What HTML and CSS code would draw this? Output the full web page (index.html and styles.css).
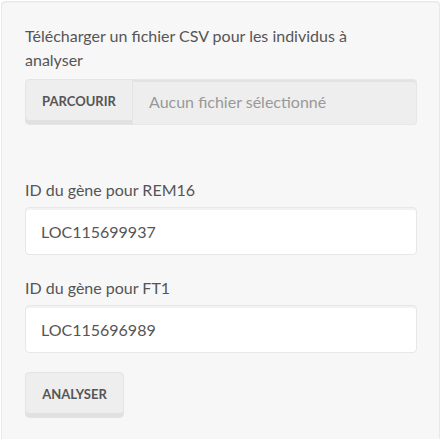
FILE: index.html
```html
<!DOCTYPE html>
<html lang="fr">
<head>
<meta charset="utf-8">
<link rel="stylesheet" href="styles.css">
</head>
<body>
<div class="well">
  <div class="field">
    <label class="lbl lbl-file">Télécharger un fichier CSV pour les individus à<br>analyser</label>
    <div class="input-group">
      <span class="btn btn-browse">Parcourir</span>
      <span class="file-name">Aucun fichier sélectionné</span>
    </div>
  </div>
  <div class="field field-gap">
    <label class="lbl" for="rem16">ID du gène pour REM16</label>
    <input class="text-input" id="rem16" type="text" value="LOC115699937">
  </div>
  <div class="field">
    <label class="lbl" for="ft1">ID du gène pour FT1</label>
    <input class="text-input" id="ft1" type="text" value="LOC115696989">
  </div>
  <div class="actions">
    <button class="btn btn-action" type="button">Analyser</button>
  </div>
</div>
</body>
</html>
```

FILE: styles.css
```css
html, body {
  margin: 0;
  padding: 0;
  background: #ffffff;
}
body {
  padding: 1px 1px 0 1px;
  height: 100vh;
  box-sizing: border-box;
  overflow: hidden;
  font-family: Lato, "Noto Sans", sans-serif;
  font-size: 16px;
  line-height: 24px;
  color: #555555;
}
.well {
  background: #f7f7f7;
  border: 1px solid #e9e9e9;
  border-bottom: none;
  border-radius: 4px 4px 0 0;
  box-shadow: inset 0 1px 1px rgba(0,0,0,0.03);
  padding: 22px 22px 0 23px;
  height: 100%;
  box-sizing: border-box;
}
.field {
  display: flex;
  flex-direction: column;
  margin-bottom: 21px;
}
.field-gap {
  margin-top: 53px;
}
.lbl {
  display: block;
  margin-bottom: 5px;
  color: #555555;
}
.lbl-file {
  margin-bottom: 7px;
}
.input-group {
  display: flex;
  height: 46px;
}
.btn {
  display: inline-flex;
  align-items: center;
  justify-content: center;
  background: #eeeeee;
  border: 1px solid #e4e4e4;
  border-radius: 4px;
  box-shadow: inset 0 -4px 0 #e1e1e1;
  font-family: inherit;
  font-weight: 700;
  font-size: 13px;
  text-transform: uppercase;
  color: #555555;
  box-sizing: border-box;
  padding: 0 14px 2px;
}
.btn-browse {
  width: 108px;
  border-radius: 4px 0 0 4px;
}
.file-name {
  flex: 1;
  display: flex;
  align-items: center;
  background: #eeeeee;
  border: 1px solid #e6e6e6;
  border-left: none;
  border-radius: 0 4px 4px 0;
  box-shadow: inset 0 2px 0 #e3e3e3;
  padding: 0 16px;
  color: #999999;
  box-sizing: border-box;
}
.text-input {
  height: 48px;
  box-sizing: border-box;
  border: 1px solid #e7e7e7;
  border-radius: 4px;
  background: #ffffff;
  box-shadow: inset 0 2px 0 rgba(0,0,0,0.05);
  padding: 0 15px;
  font-family: inherit;
  font-size: 16px;
  color: #555555;
  outline: none;
}
.actions {
  display: flex;
  margin-top: -2px;
}
.btn-action {
  width: 99px;
  height: 46px;
}
```
